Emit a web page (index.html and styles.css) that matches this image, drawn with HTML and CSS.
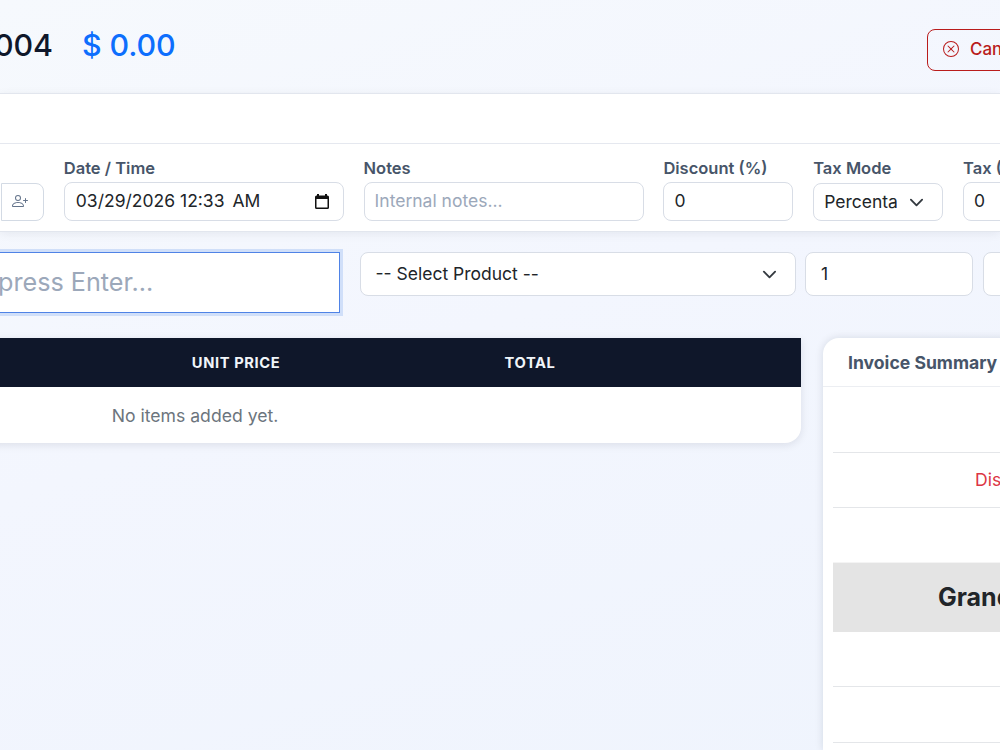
FILE: index.html
```html
<!DOCTYPE html>
<html lang="en">
<head>
    <meta charset="UTF-8">
    <title>New Invoice</title>
    <link rel="stylesheet" href="styles.css">
</head>
<body>
    <header class="page-header">
        <div class="invoice-title">
            <span class="invoice-no">004</span>
            <span class="invoice-amount">$ 0.00</span>
        </div>
        <button class="btn-cancel" type="button">
            <svg width="16" height="16" viewBox="0 0 16 16" fill="currentColor">
                <path d="M8 15A7 7 0 1 1 8 1a7 7 0 0 1 0 14m0 1A8 8 0 1 0 8 0a8 8 0 0 0 0 16"/>
                <path d="M4.646 4.646a.5.5 0 0 1 .708 0L8 7.293l2.646-2.647a.5.5 0 0 1 .708.708L8.707 8l2.647 2.646a.5.5 0 0 1-.708.708L8 8.707l-2.646 2.647a.5.5 0 0 1-.708-.708L7.293 8 4.646 5.354a.5.5 0 0 1 0-.708"/>
            </svg>
            <span>Cancel</span>
        </button>
    </header>

    <section class="details-card">
        <div class="details-head"></div>
        <div class="details-body">
            <div class="field customer">
                <button class="btn-add-customer" type="button">
                    <svg width="16" height="16" viewBox="0 0 16 16" fill="currentColor">
                        <path d="M6 8a3 3 0 1 0 0-6 3 3 0 0 0 0 6m2-3a2 2 0 1 1-4 0 2 2 0 0 1 4 0m4 8c0 1-1 1-1 1H1s-1 0-1-1 1-4 6-4 6 3 6 4m-1-.004c-.001-.246-.154-.986-.832-1.664C9.516 10.68 8.289 10 6 10s-3.516.68-4.168 1.332c-.678.678-.83 1.418-.832 1.664z"/>
                        <path fill-rule="evenodd" d="M13.5 5a.5.5 0 0 1 .5.5V7h1.5a.5.5 0 0 1 0 1H14v1.5a.5.5 0 0 1-1 0V8h-1.5a.5.5 0 0 1 0-1H13V5.500a.5.5 0 0 1 .5-.5"/>
                    </svg>
                </button>
            </div>
            <div class="field wide">
                <label>Date / Time</label>
                <div class="date-input" tabindex="0">
                    <span class="date">03/29/2026</span>
                    <span class="time">12:33</span>
                    <span class="ampm">AM</span>
                    <svg width="14" height="15" viewBox="0 0 14 15">
                        <path fill="#111" fill-rule="evenodd" d="M2 0h2v1.500h6V0h2v1.500h.5A1.500 1.500 0 0 1 14 3v10.500a1.500 1.500 0 0 1-1.500 1.500h-11A1.500 1.500 0 0 1 0 13.500V3a1.500 1.500 0 0 1 1.500-1.500H2zM1.500 5v8.500h11V5z"/>
                    </svg>
                </div>
            </div>
            <div class="field wide">
                <label for="notes">Notes</label>
                <input type="text" id="notes" placeholder="Internal notes...">
            </div>
            <div class="field narrow">
                <label for="discount">Discount (%)</label>
                <input type="text" id="discount" value="0">
            </div>
            <div class="field narrow">
                <label for="taxMode">Tax Mode</label>
                <select id="taxMode">
                    <option>Percentage</option>
                </select>
            </div>
            <div class="field narrow">
                <label for="tax">Tax (%)</label>
                <input type="text" id="tax" value="0">
            </div>
        </div>
    </section>

    <section class="product-row">
        <input type="text" class="barcode" placeholder="press Enter...">
        <select class="product">
            <option>-- Select Product --</option>
        </select>
        <input type="text" class="qty" value="1">
        <input type="text" class="price">
    </section>

    <main class="content">
        <div class="items-card">
            <table class="items-table">
                <thead>
                    <tr>
                        <th class="col-product"></th>
                        <th class="col-num">Unit Price</th>
                        <th class="col-num">Total</th>
                        <th></th>
                    </tr>
                </thead>
                <tbody>
                    <tr>
                        <td colspan="4">No items added yet.</td>
                    </tr>
                </tbody>
            </table>
        </div>

        <aside class="summary-card">
            <h2>Invoice Summary</h2>
            <div class="summary-body">
                <div class="summary-row first"></div>
                <div class="summary-row discount">Discount</div>
                <div class="summary-row tax"></div>
                <div class="summary-row grand">Grand Total</div>
                <div class="summary-row"></div>
                <div class="summary-row last"></div>
            </div>
        </aside>
    </main>
</body>
</html>
```

FILE: styles.css
```css
* {
    box-sizing: border-box;
}
body {
    margin: 0;
    height: 750px;
    overflow: hidden;
    font-family: Inter, sans-serif;
    font-size: 17.6px;
    color: #212529;
    background: linear-gradient(160deg, #f6f9fd 0%, #f3f6fe 45%, #eff4fd 100%);
}
input,
select,
button {
    font-family: inherit;
    margin: 0;
    outline: none;
}
input::placeholder {
    color: #9ca8ba;
    opacity: 1;
}

/* header */
.page-header {
    display: flex;
    justify-content: space-between;
    align-items: flex-start;
    height: 94px;
    padding-top: 25px;
}
.invoice-title {
    display: flex;
    gap: 29px;
    margin-left: -6px;
    font-size: 30.4px;
    font-weight: 500;
    line-height: 40px;
    letter-spacing: -0.1px;
    color: #0f172a;
    white-space: nowrap;
}
.invoice-amount {
    color: #0d6efd;
}
.btn-cancel {
    display: flex;
    align-items: center;
    flex: none;
    gap: 11px;
    width: 118px;
    height: 42px;
    margin: 4px -45px 0 0;
    padding: 0 15px 2px;
    border: 1px solid #b91c1c;
    border-radius: 8px;
    background: transparent;
    color: #b91c1c;
    font-size: 17px;
    font-weight: 500;
}
.btn-cancel svg {
    flex: none;
}

/* invoice details */
.details-card {
    height: 137px;
    background: #fff;
    box-shadow: 0 0 0 1px #e2e6ee, 0 2px 10px rgba(15, 23, 42, 0.08);
}
.details-head {
    height: 50px;
    border-bottom: 1px solid #e5e8ef;
}
.details-body {
    display: flex;
    gap: 19.8px;
    padding-top: 13px;
}
.field {
    display: flex;
    flex-direction: column;
    flex: none;
}
.field.wide {
    width: 280px;
}
.field.narrow {
    width: 130px;
}
.field.customer {
    width: 44px;
    padding-top: 26px;
}
.field label {
    height: 25px;
    line-height: 22px;
    font-size: 16.5px;
    font-weight: 600;
    color: #475569;
    white-space: nowrap;
}
.field input,
.field select,
.date-input {
    width: 100%;
    height: 39px;
    padding: 0 10px 2px;
    border: 1px solid #d8dde6;
    border-radius: 8px;
    background-color: #fff;
    color: #212529;
    font-size: 17.5px;
}
.field select {
    height: 38px;
    margin-top: 1px;
    padding: 0 45px 1px 10px;
}
.date-input {
    display: flex;
    align-items: center;
    padding-left: 11px;
}
.date-input .date {
    margin-right: 5px;
}
.date-input .time {
    margin-right: 8px;
}
.date-input svg {
    margin: 2px 4px 0 auto;
}
select {
    appearance: none;
    background-image: url("data:image/svg+xml,%3csvg xmlns='http://www.w3.org/2000/svg' viewBox='0 0 16 16'%3e%3cpath fill='none' stroke='%23343a40' stroke-linecap='round' stroke-linejoin='round' stroke-width='2' d='m2 5 6 6 6-6'/%3e%3c/svg%3e");
    background-repeat: no-repeat;
    background-position: right 18px center;
    background-size: 15px 15px;
}
.btn-add-customer {
    display: flex;
    align-items: center;
    justify-content: center;
    width: 43px;
    height: 38px;
    margin-left: 1px;
    padding: 0 5px 2px 0;
    border: 1px solid #d3dae4;
    border-radius: 0 8px 8px 0;
    background: #fff;
    color: #64748b;
}
.btn-add-customer svg {
    flex: none;
}

/* add product */
.product-row {
    display: flex;
    align-items: flex-start;
    padding-top: 21px;
    height: 107px;
}
.product-row input,
.product-row select {
    flex: none;
    height: 44px;
    padding: 0 15px 2px;
    border: 1px solid #d8dde6;
    border-radius: 8px;
    background-color: #fff;
    color: #212529;
    font-size: 17.5px;
}
.product-row .barcode {
    width: 360px;
    height: 61px;
    margin-left: -20px;
    padding-left: 17px;
    border-color: #4f83e6;
    border-radius: 0;
    box-shadow: 0 0 0 3px #d0dff9;
    font-size: 25.2px;
}
.product-row .product {
    width: 436px;
    margin-left: 19.5px;
}
.product-row .qty {
    width: 168px;
    margin-left: 9.500px;
}
.product-row .price {
    width: 168px;
    margin-left: 10px;
}

/* items and summary */
.content {
    display: flex;
    align-items: flex-start;
}
.items-card {
    flex: none;
    width: 1212px;
    margin-left: -411px;
    overflow: hidden;
    border-radius: 0 0 16px 16px;
    background: #fff;
    box-shadow: 0 2px 8px rgba(15, 23, 42, 0.1);
}
.items-table {
    width: 100%;
    table-layout: fixed;
    border-collapse: collapse;
    text-align: center;
}
.items-table th {
    height: 49px;
    padding: 0;
    background: #0f172a;
    color: #f1f5f9;
    font-size: 14.7px;
    font-weight: 700;
    letter-spacing: 0.6px;
    text-transform: uppercase;
}
.items-table td {
    height: 56px;
    padding: 0;
    color: #6c757d;
}
.col-product {
    width: 500px;
}
.col-num {
    width: 294px;
}
.summary-card {
    flex: none;
    width: 390px;
    height: 412px;
    margin-left: 22px;
    border-radius: 16px 16px 0 0;
    background: #fff;
    box-shadow: 0 0 8px rgba(15, 23, 42, 0.12);
}
.summary-card h2 {
    height: 49px;
    margin: 0;
    padding-left: 25px;
    border-bottom: 1px solid #eceef2;
    line-height: 49px;
    font-size: 17.6px;
    font-weight: 700;
    color: #475569;
}
.summary-body {
    padding: 0 10px;
}
.summary-row {
    height: 55px;
    border-bottom: 1px solid #e4e6e9;
    line-height: 54px;
}
.summary-row.first {
    height: 66px;
}
.summary-row.discount {
    padding-left: 142px;
    color: #dc3545;
}
.summary-row.tax {
    border-bottom-color: #f4f4f4;
}
.summary-row.grand {
    height: 69px;
    padding-left: 105px;
    border: 0;
    background: #e4e4e4;
    line-height: 68px;
    font-size: 25px;
    font-weight: 700;
}
.summary-row.last {
    height: 56px;
}
```
